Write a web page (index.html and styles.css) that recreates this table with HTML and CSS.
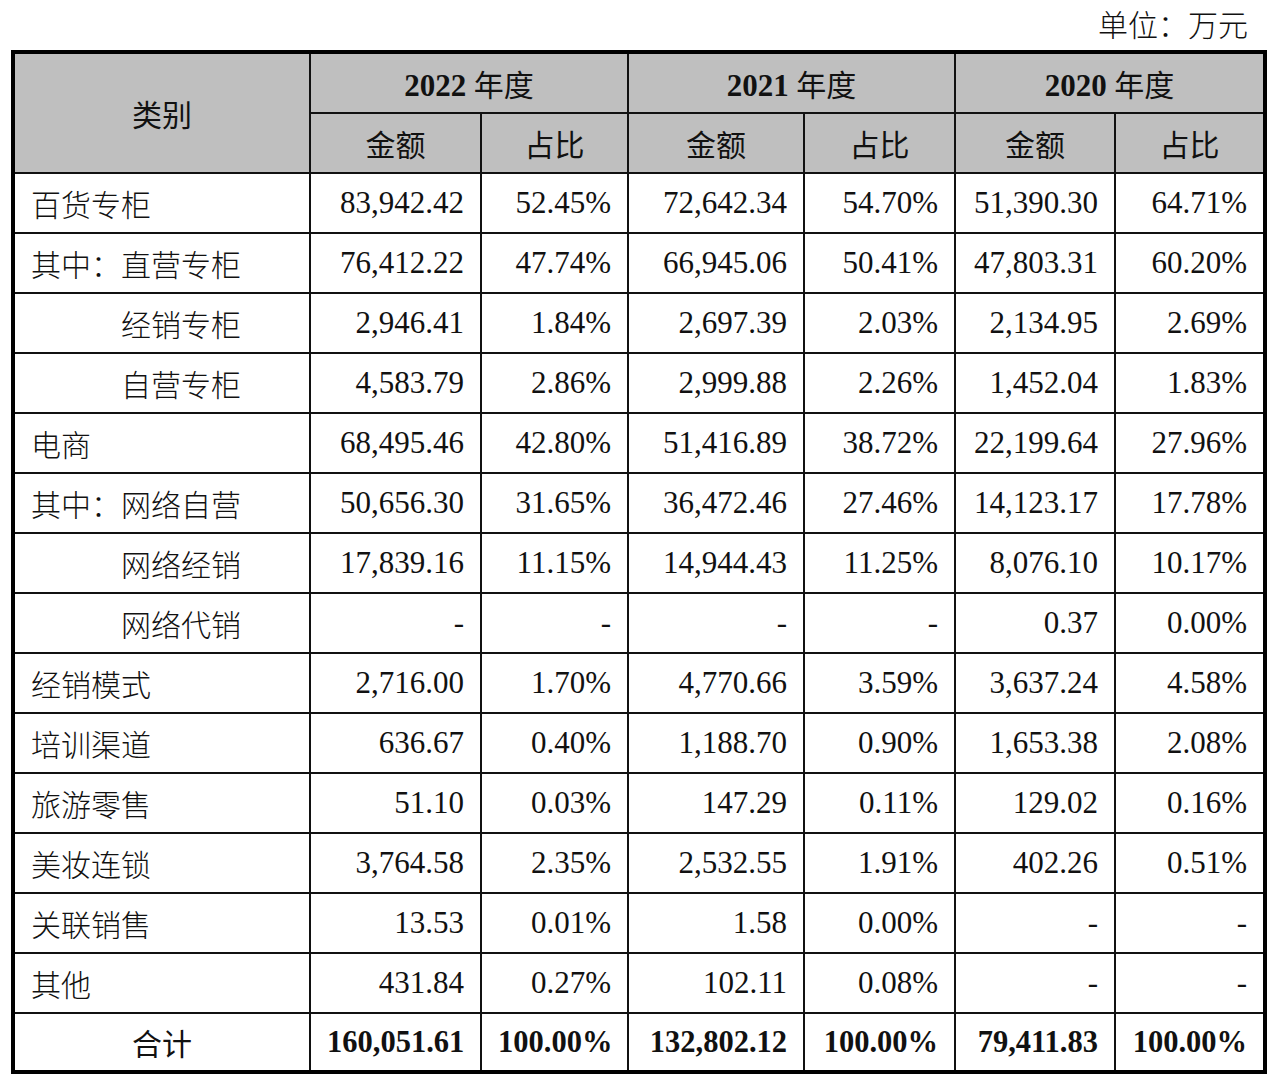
FILE: index.html
```html
<!DOCTYPE html>
<html lang="zh-CN">
<head>
<meta charset="utf-8">
<title>收入构成</title>
<link rel="stylesheet" href="styles.css">
</head>
<body>
<div class="page">
  <div class="unit">单位：万元</div>
  <table class="data">
    <colgroup>
      <col class="c1"><col class="c2"><col class="c3"><col class="c4"><col class="c5"><col class="c6"><col class="c7">
    </colgroup>
    <thead>
      <tr class="hrow">
        <th rowspan="2" class="hcat">类别</th>
        <th colspan="2"><b class="yr">2022</b> 年度</th>
        <th colspan="2"><b class="yr">2021</b> 年度</th>
        <th colspan="2" class="last"><b class="yr">2020</b> 年度</th>
      </tr>
      <tr class="hrow">
        <th>金额</th><th>占比</th>
        <th>金额</th><th>占比</th>
        <th>金额</th><th class="last">占比</th>
      </tr>
    </thead>
    <tbody>
      <tr><td class="name">百货专柜</td><td>83,942.42</td><td>52.45%</td><td>72,642.34</td><td>54.70%</td><td>51,390.30</td><td class="last">64.71%</td></tr>
      <tr><td class="name">其中：直营专柜</td><td>76,412.22</td><td>47.74%</td><td>66,945.06</td><td>50.41%</td><td>47,803.31</td><td class="last">60.20%</td></tr>
      <tr><td class="name sub">经销专柜</td><td>2,946.41</td><td>1.84%</td><td>2,697.39</td><td>2.03%</td><td>2,134.95</td><td class="last">2.69%</td></tr>
      <tr><td class="name sub">自营专柜</td><td>4,583.79</td><td>2.86%</td><td>2,999.88</td><td>2.26%</td><td>1,452.04</td><td class="last">1.83%</td></tr>
      <tr><td class="name">电商</td><td>68,495.46</td><td>42.80%</td><td>51,416.89</td><td>38.72%</td><td>22,199.64</td><td class="last">27.96%</td></tr>
      <tr><td class="name">其中：网络自营</td><td>50,656.30</td><td>31.65%</td><td>36,472.46</td><td>27.46%</td><td>14,123.17</td><td class="last">17.78%</td></tr>
      <tr><td class="name sub">网络经销</td><td>17,839.16</td><td>11.15%</td><td>14,944.43</td><td>11.25%</td><td>8,076.10</td><td class="last">10.17%</td></tr>
      <tr><td class="name sub">网络代销</td><td>-</td><td>-</td><td>-</td><td>-</td><td>0.37</td><td class="last">0.00%</td></tr>
      <tr><td class="name">经销模式</td><td>2,716.00</td><td>1.70%</td><td>4,770.66</td><td>3.59%</td><td>3,637.24</td><td class="last">4.58%</td></tr>
      <tr><td class="name">培训渠道</td><td>636.67</td><td>0.40%</td><td>1,188.70</td><td>0.90%</td><td>1,653.38</td><td class="last">2.08%</td></tr>
      <tr><td class="name">旅游零售</td><td>51.10</td><td>0.03%</td><td>147.29</td><td>0.11%</td><td>129.02</td><td class="last">0.16%</td></tr>
      <tr><td class="name">美妆连锁</td><td>3,764.58</td><td>2.35%</td><td>2,532.55</td><td>1.91%</td><td>402.26</td><td class="last">0.51%</td></tr>
      <tr><td class="name">关联销售</td><td>13.53</td><td>0.01%</td><td>1.58</td><td>0.00%</td><td>-</td><td class="last">-</td></tr>
      <tr><td class="name">其他</td><td>431.84</td><td>0.27%</td><td>102.11</td><td>0.08%</td><td>-</td><td class="last">-</td></tr>
      <tr class="total"><td class="name tot">合计</td><td>160,051.61</td><td>100.00%</td><td>132,802.12</td><td>100.00%</td><td>79,411.83</td><td class="last">100.00%</td></tr>
    </tbody>
  </table>
</div>
</body>
</html>
```

FILE: styles.css
```css
html, body {
  margin: 0;
  padding: 0;
  background: #ffffff;
}

body {
  font-family: "Liberation Serif", "Noto Sans CJK SC", serif;
  font-size: 30px;
  color: #111111;
}

.page {
  margin: 0 13px 0 11px;
}

.unit {
  height: 50px;
  line-height: 50px;
  text-align: right;
  padding-right: 19px;
  box-sizing: border-box;
  font-family: "Noto Sans CJK SC", sans-serif;
  font-weight: 300;
  position: relative;
  top: -2px;
}

.data {
  width: 1256px;
  border: 4px solid #000000;
  border-spacing: 0;
  table-layout: fixed;
}

.c1 { width: 296px; }
.c2 { width: 171px; }
.c3 { width: 147px; }
.c4 { width: 176px; }
.c5 { width: 151px; }
.c6 { width: 160px; }
.c7 { width: 147px; }

th, td {
  box-sizing: border-box;
  border-right: 2px solid #111111;
  border-bottom: 2px solid #111111;
  padding: 0 16px 0 16px;
  height: 60px;
  white-space: nowrap;
  overflow: hidden;
}

.last {
  border-right: none;
}

th {
  background: #bfbfbf;
  font-family: "Liberation Serif", "Noto Sans CJK SC", serif;
  font-weight: 400;
  text-align: center;
  color: #111111;
}

.yr {
  font-weight: 700;
  font-size: 31px;
}

td {
  text-align: right;
  font-weight: 400;
  font-size: 31px;
}

td.name {
  text-align: left;
  font-family: "Noto Sans CJK SC", sans-serif;
  font-size: 30px;
  font-weight: 300;
  padding-left: 16px;
}

td.sub {
  padding-left: 106px;
}

.total td {
  height: 56px;
  border-bottom: none;
  font-weight: 700;
  font-size: 30.5px;
}

.total td.tot {
  text-align: center;
  font-weight: 400;
  font-size: 30px;
}
```
